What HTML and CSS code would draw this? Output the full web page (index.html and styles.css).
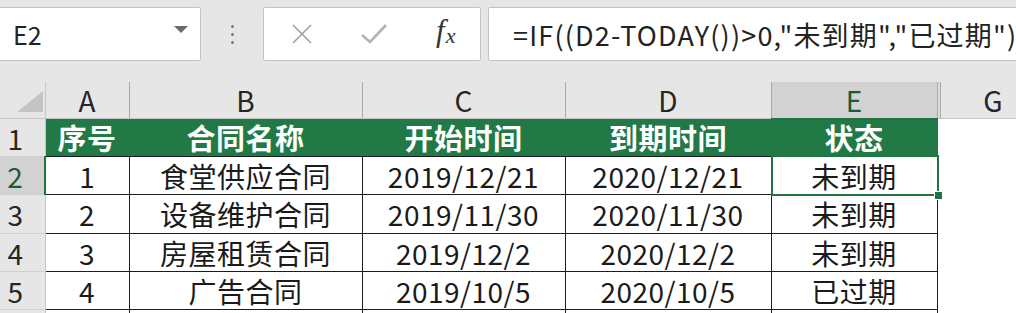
FILE: index.html
```html
<!DOCTYPE html>
<html>
<head>
	<title>合同状态</title>
	<meta charset="utf-8">
	<link rel="stylesheet" href="styles.css">
</head>
<body>
<div id="toolbar">
	<div class="namebox">
		<span class="ref">E2</span>
		<svg class="caret" width="14" height="8" viewBox="0 0 14 8"><path d="M0 0H14L7 7Z" fill="#6a6a6a"/></svg>
	</div>
	<div class="grip"><i></i><i></i><i></i></div>
	<div class="actions">
		<svg class="btn" width="24" height="24" viewBox="0 0 24 24"><path d="M3 3L21 21M21 3L3 21" stroke="#a0a0a0" stroke-width="1.6" fill="none"/></svg>
		<svg class="btn" width="28" height="24" viewBox="0 0 28 24"><path d="M2 13L10 20L26 3" stroke="#b3b3b3" stroke-width="2.6" fill="none"/></svg>
		<span class="fx">f<sub>x</sub></span>
	</div>
	<div class="formula">=IF((D2-TODAY())&gt;0,"未到期","已过期")</div>
</div>
<table id="sheet">
	<colgroup>
		<col class="c-row"><col class="c-a"><col class="c-b"><col class="c-c"><col class="c-d"><col class="c-e"><col class="c-f"><col class="c-g">
	</colgroup>
	<tr class="colhead">
		<th class="corner"><svg width="45" height="36" viewBox="0 0 45 36"><path d="M43 9V30H17Z" fill="#c4c4c4"/></svg></th>
		<th>A</th><th>B</th><th>C</th><th>D</th><th class="cur">E</th><th class="hid"></th><th>G</th>
	</tr>
	<tr class="title">
		<th class="rowhead">1</th>
		<td>序号</td><td>合同名称</td><td>开始时间</td><td>到期时间</td><td>状态</td><td class="out"></td><td class="out"></td>
	</tr>
	<tr>
		<th class="rowhead cur">2</th>
		<td>1</td><td>食堂供应合同</td><td>2019/12/21</td><td>2020/12/21</td><td class="active">未到期</td><td class="out"></td><td class="out"></td>
	</tr>
	<tr class="tall">
		<th class="rowhead">3</th>
		<td>2</td><td>设备维护合同</td><td>2019/11/30</td><td>2020/11/30</td><td>未到期</td><td class="out"></td><td class="out"></td>
	</tr>
	<tr>
		<th class="rowhead">4</th>
		<td>3</td><td>房屋租赁合同</td><td>2019/12/2</td><td>2020/12/2</td><td>未到期</td><td class="out"></td><td class="out"></td>
	</tr>
	<tr>
		<th class="rowhead">5</th>
		<td>4</td><td>广告合同</td><td>2019/10/5</td><td>2020/10/5</td><td>已过期</td><td class="out"></td><td class="out"></td>
	</tr>
	<tr>
		<th class="rowhead"></th>
		<td></td><td></td><td></td><td></td><td></td><td class="out"></td><td class="out"></td>
	</tr>
</table>
</body>
</html>
```
FILE: styles.css
```css
body {
	margin:0;
	padding:0;
	width:1016px;
	height:313px;
	overflow:hidden;
	background-color:#e6e6e6;
	font-family:"Noto Sans CJK SC", "Liberation Sans", sans-serif;
	color:#222;
}
#toolbar {
	display:flex;
	align-items:stretch;
	height:54px;
	padding-top:7px;
	padding-bottom:21px;
}
.namebox {
	display:flex;
	align-items:center;
	justify-content:space-between;
	width:203px;
	margin-left:-2px;
	padding:0 12px 0 14px;
	box-sizing:border-box;
	background:#fff;
	border:1px solid #c3c3c3;
	border-radius:2px;
	font-size:25px;
}
.namebox .caret{margin-top:-8px;}
.grip {
	width:62px;
	display:flex;
	flex-direction:column;
	align-items:center;
	justify-content:center;
	gap:5px;
}
.grip i{display:block;width:3px;height:3px;border-radius:50%;background:#7a7a7a;}
.actions {
	display:flex;
	align-items:center;
	width:218px;
	box-sizing:border-box;
	padding:0 0 0 26px;
	gap:46px;
	background:#fff;
	border:1px solid #c3c3c3;
	border-radius:2px;
}
.fx {
	font-family:"Liberation Serif", serif;
	font-style:italic;
	font-size:31px;
	color:#333;
	margin-left:2px;
	margin-top:-6px;
}
.fx sub{font-size:22px;vertical-align:-2px;margin-left:1px;}
.formula {
	flex:1;
	margin-left:7px;
	margin-right:-10px;
	display:flex;
	align-items:center;
	padding-left:24px;
	background:#fff;
	border:1px solid #c3c3c3;
	border-radius:2px;
	font-size:27px;
	letter-spacing:1.2px;
	white-space:nowrap;
}
#sheet {
	border-collapse:collapse;
	table-layout:fixed;
	width:1046px;
	font-size:28px;
	background:#fff;
}
.c-row{width:45px;}
.c-a{width:84px;}
.c-b{width:233px;}
.c-c{width:203px;}
.c-d{width:206px;}
.c-e{width:166px;}
.c-f{width:3px;}
.c-g{width:106px;}
#sheet th, #sheet td{
	padding:0;
	text-align:center;
	font-weight:normal;
	line-height:1;
	white-space:nowrap;
}
#sheet tr{height:38px;}
#sheet tr.tall{height:39px;}
#sheet tr.colhead{height:36px;}
.colhead th{
	background:#e6e6e6;
	border-right:1px solid #a9a9a9;
	border-bottom:1px solid #c5c5c5;
	color:#262626;
}
.colhead th.corner{border-right:1px solid #c5c5c5;}
.corner svg{display:block;}
.colhead th.cur{background:#d2d2d2;color:#1e5a38;border-bottom:2px solid #217346;}
.colhead th.hid{background:#dcdcdc;border-right:1px solid #a9a9a9;}
.rowhead{
	background:#e6e6e6;
	border-bottom:1px solid #d0d0d0;
	border-right:1px solid #c5c5c5;
	padding-right:14px !important;
	color:#262626;
}
.rowhead.cur{background:#d2d2d2;color:#1e5a38;border-right:2px solid #217346;}
#sheet td{border:1px solid #1c1c1c;color:#1a1a1a;letter-spacing:0.5px;}
#sheet td.out{border:none;background:#fff;}
#sheet tr.title td{
	background:#217a46;
	color:#fff;
	font-weight:bold;
	font-size:29px;
	letter-spacing:0.5px;
	border-color:#217a46;
	border-bottom-color:#1c1c1c;
}
#sheet tr.title td.out{background:#fff;}
#sheet td.active{position:relative;}
#sheet td.active:before{
	content:"";
	position:absolute;
	top:-2px;
	left:-1px;
	right:-2px;
	bottom:-2px;
	border:2px solid #217346;
}
#sheet td.active:after{
	content:"";
	position:absolute;
	right:-6px;
	bottom:-6px;
	width:7px;
	height:7px;
	background:#217346;
	border:1px solid #fff;
}
```
